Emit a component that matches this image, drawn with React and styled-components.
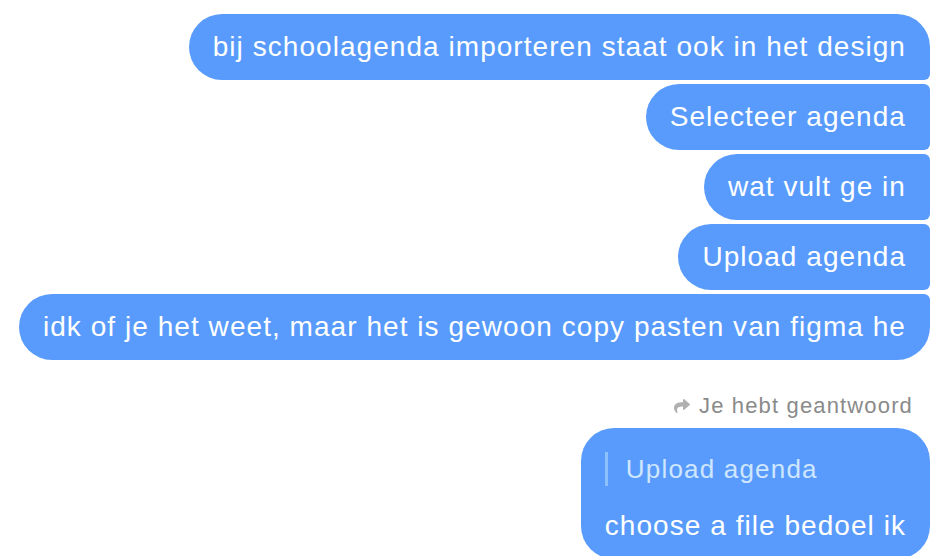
import styled, { createGlobalStyle } from "styled-components";
import { FaShare } from "react-icons/fa";

const GlobalStyle = createGlobalStyle`
  body {
    margin: 0;
    background: #ffffff;
    font-family: "Liberation Sans", Arial, sans-serif;
  }
`;

const Thread = styled.div`
  display: flex;
  flex-direction: column;
  align-items: flex-end;
  padding: 14px 4px 0 0;
  height: 556px;
  box-sizing: border-box;
  overflow: hidden;
`;

const Group = styled.div`
  display: flex;
  flex-direction: column;
  align-items: flex-end;
  gap: 4px;
`;

const radius = (pos) => {
  if (pos === "first") return "33px 33px 6px 33px";
  if (pos === "last") return "33px 6px 33px 33px";
  if (pos === "middle") return "33px 6px 6px 33px";
  return "33px";
};

const Bubble = styled.div`
  background: #589bfc;
  color: #ffffff;
  font-size: 28px;
  letter-spacing: 1.05px;
  line-height: 30px;
  padding: 18px 24px;
  border-radius: ${(props) => radius(props.pos)};
  white-space: nowrap;
`;

const ReplyNote = styled.div`
  display: flex;
  align-items: center;
  gap: 9px;
  margin: 34px 17px 10px 0;
  color: #8a8a8a;
  font-size: 22px;
  letter-spacing: 1.15px;
  line-height: 24px;
  svg {
    color: #b0b0b0;
  }
`;

const ReplyBubble = styled(Bubble)`
  padding: 24px 24px 18px 24px;
  display: flex;
  flex-direction: column;
  gap: 25px;
`;

const Quote = styled.div`
  border-left: 3px solid #8cc0ff;
  padding-left: 18px;
  line-height: 34px;
  font-size: 26px;
  letter-spacing: 1.2px;
  color: #cfe6ff;
`;

const messages = [
  { text: "bij schoolagenda importeren staat ook in het design", pos: "first" },
  { text: "Selecteer agenda", pos: "middle" },
  { text: "wat vult ge in", pos: "middle" },
  { text: "Upload agenda", pos: "middle" },
  { text: "idk of je het weet, maar het is gewoon copy pasten van figma he", pos: "last" },
];

export default function App() {
  return (
    <>
      <GlobalStyle />
      <Thread>
        <Group>
          {messages.map((m) => (
            <Bubble key={m.text} pos={m.pos}>
              {m.text}
            </Bubble>
          ))}
        </Group>
        <ReplyNote>
          <FaShare size={16} />
          Je hebt geantwoord
        </ReplyNote>
        <ReplyBubble pos="single">
          <Quote>Upload agenda</Quote>
          <div>choose a file bedoel ik</div>
        </ReplyBubble>
      </Thread>
    </>
  );
}
